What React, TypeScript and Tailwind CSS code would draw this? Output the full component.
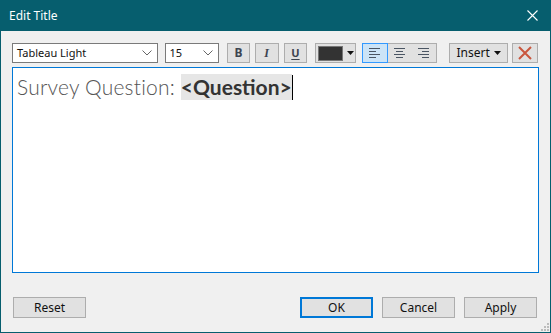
const ui = { fontFamily: '"Noto Sans", "Open Sans", sans-serif' };

function Chevron() {
  return (
    <svg width="10" height="6" viewBox="0 0 10 6" className="text-[#666]">
      <path d="M0.5 0.5 L5 5 L9.5 0.5" fill="none" stroke="currentColor" strokeWidth="1" />
    </svg>
  );
}

function Caret() {
  return (
    <svg width="7" height="4" viewBox="0 0 7 4">
      <path d="M0 0 H7 L3.5 4 Z" fill="#111" />
    </svg>
  );
}

function AlignIcon({ kind }: { kind: "left" | "center" | "right" }) {
  const rows = [
    { y: 0.5, w: 11 },
    { y: 3.5, w: 7 },
    { y: 6.5, w: 11 },
    { y: 9.5, w: 7 },
  ];
  return (
    <svg width="11" height="10" viewBox="0 0 11 10">
      {rows.map((r) => {
        const x = kind === "left" ? 0 : kind === "right" ? 11 - r.w : (11 - r.w) / 2;
        return <line key={r.y} x1={x} x2={x + r.w} y1={r.y} y2={r.y} stroke="#4a5563" strokeWidth="1" />;
      })}
    </svg>
  );
}

function ToolButton({ children, className = "" }: { children: React.ReactNode; className?: string }) {
  return (
    <div className={`flex h-[20px] items-center justify-center border border-[#adadad] bg-[#e1e1e1] ${className}`}>
      {children}
    </div>
  );
}

function DialogButton({ label, primary = false }: { label: string; primary?: boolean }) {
  return (
    <button
      className={`flex h-[21px] w-[73px] items-center justify-center bg-[#e1e1e1] text-[12px] text-[#111] ${
        primary ? "border-2 border-[#0078d7]" : "border border-[#adadad]"
      }`}
      style={ui}
    >
      {label}
    </button>
  );
}

export default function App() {
  return (
    <div className="flex h-[333px] w-[551px] flex-col bg-[#065e6e]" style={ui}>
      {/* TITLE BAR */}
      <div className="flex h-[31px] items-center justify-between pl-[9px] pr-[13px]">
        <span className="text-[12px] text-white">Edit Title</span>
        <svg width="11" height="11" viewBox="0 0 11 11">
          <path d="M0.5 0.5 L10.5 10.5 M10.5 0.5 L0.5 10.5" stroke="#fff" strokeWidth="1.1" />
        </svg>
      </div>

      {/* BODY */}
      <div className="relative mx-[1px] mb-[1px] flex flex-1 flex-col bg-[#f0f0f0] pl-[11px] pr-[12px]">
        {/* TOOLBAR */}
        <div className="mt-[12px] flex h-[20px] items-center">
          <div className="flex h-[20px] w-[147px] items-center justify-between border border-[#7a7a7a] bg-white pl-[4px] pr-[5px]">
            <span className="text-[11px] text-[#111]">Tableau Light</span>
            <Chevron />
          </div>
          <div className="ml-[7px] flex h-[20px] w-[55px] items-center justify-between border border-[#7a7a7a] bg-white pl-[4px] pr-[5px]">
            <span className="text-[11px] text-[#111]">15</span>
            <Chevron />
          </div>

          <ToolButton className="ml-[8px] w-[23px]">
            <span className="text-[12px] font-bold text-[#3c4450]">B</span>
          </ToolButton>
          <ToolButton className="ml-[5px] w-[24px]">
            <span className="text-[12px] font-bold italic text-[#3c4450]" style={{ fontFamily: '"Liberation Serif", serif' }}>
              I
            </span>
          </ToolButton>
          <ToolButton className="ml-[5px] w-[24px]">
            <span className="text-[11px] font-bold text-[#3c4450] underline underline-offset-2">U</span>
          </ToolButton>

          <ToolButton className="ml-[8px] w-[41px] justify-start gap-[4px] pl-[2px]">
            <div className="h-[15px] w-[25px] border border-[#777] bg-[#333]" />
            <Caret />
          </ToolButton>

          <div className="ml-[6px] flex h-[20px] w-[75px] border border-[#adadad] bg-[#e1e1e1]">
            <div className="-my-[1px] -ml-[1px] flex h-[20px] w-[26px] items-center justify-center border border-[#3399ff] bg-[#cce4f7]">
              <AlignIcon kind="left" />
            </div>
            <div className="flex w-[24px] items-center justify-center">
              <AlignIcon kind="center" />
            </div>
            <div className="flex w-[24px] items-center justify-center">
              <AlignIcon kind="right" />
            </div>
          </div>

          <ToolButton className="ml-[12px] w-[60px] gap-[4px]">
            <span className="text-[12px] text-[#111]">Insert</span>
            <Caret />
          </ToolButton>
          <ToolButton className="ml-[4px] w-[26px]">
            <svg width="14" height="14" viewBox="0 0 14 14">
              <path d="M1 1 L13 13 M13 1 L1 13" stroke="#c9573f" strokeWidth="2" />
            </svg>
          </ToolButton>
        </div>

        {/* EDITOR */}
        <div className="mt-[4px] h-[206px] w-[527px] border border-[#0078d7] bg-white pl-[4px] pt-[6px]">
          <div className="flex items-center text-[21px] leading-[26px]" style={{ fontFamily: 'Lato, "Noto Sans", sans-serif' }}>
            <span className="font-light tracking-[0.2px] text-[#555]">Survey Question:&nbsp;</span>
            <span className="bg-[#e6e6e6] font-bold text-[#333]">&lt;Question&gt;</span>
            <span className="h-[25px] w-[1px] bg-black" />
          </div>
        </div>

        {/* FOOTER */}
        <div className="mt-[24px] flex items-center">
          <div className="ml-[1px]">
            <DialogButton label="Reset" />
          </div>
          <div className="ml-auto mr-[1px] flex gap-[9px]">
            <DialogButton label="OK" primary />
            <DialogButton label="Cancel" />
            <DialogButton label="Apply" />
          </div>
        </div>

        {/* GRIP */}
        <svg className="absolute bottom-[1px] right-[1px]" width="9" height="9" viewBox="0 0 9 9">
          {[
            [7, 1],
            [4, 4],
            [7, 4],
            [1, 7],
            [4, 7],
            [7, 7],
          ].map(([x, y]) => (
            <rect key={`${x}-${y}`} x={x} y={y} width="2" height="2" fill="#bcbcbc" />
          ))}
        </svg>
      </div>
    </div>
  );
}
